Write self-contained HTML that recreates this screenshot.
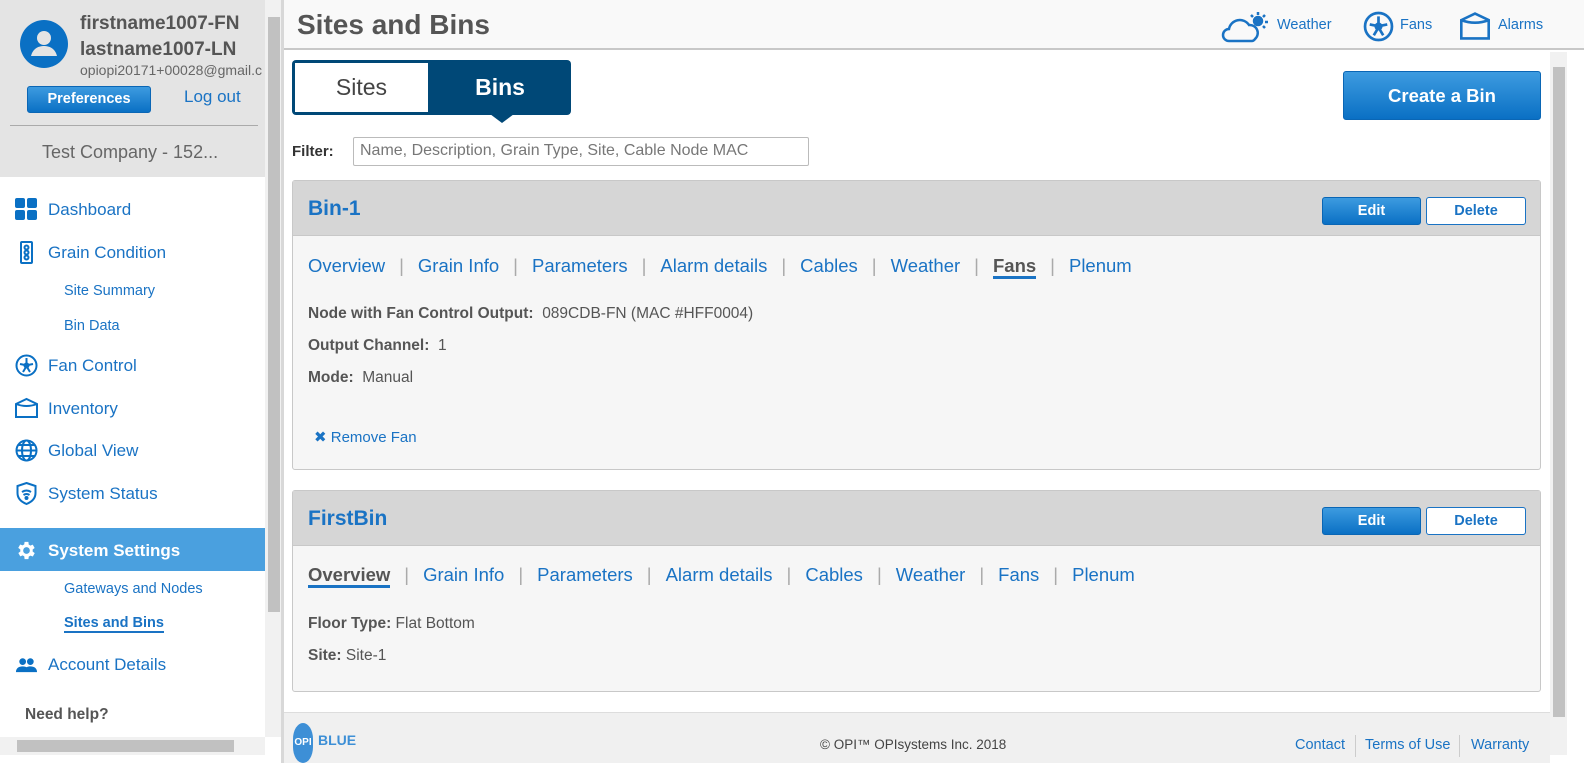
<!DOCTYPE html>
<html><head><meta charset="utf-8"><style>
*{box-sizing:border-box;margin:0;padding:0}
body{width:1584px;height:763px;overflow:hidden;font-family:"Liberation Sans",sans-serif;background:#fff;position:relative;color:#555}
.abs{position:absolute}
.blue{color:#1a73c4}
.side{left:0;top:0;width:265px;height:737px;background:#fff;overflow:hidden}
.top{left:0;top:0;width:265px;height:177px;background:#e4e4e4}
.nav{left:15px;font-size:17px;color:#1a73c4;display:flex;align-items:center}
.nav svg{margin-right:10px}
.sub{left:64px;font-size:14.5px;color:#1a73c4}
.btn{background:linear-gradient(#3d9be0,#0a70c4);color:#fff;font-weight:bold;border-radius:3px;text-align:center;border:1px solid #0a66b5}
.panel{left:292px;width:1249px;border:1px solid #c8c8c8;border-radius:3px;background:#f6f6f6}
.ph{height:55px;background:#d6d6d6;border-bottom:1px solid #c8c8c8;position:relative}
.ph h2{position:absolute;left:15px;top:16px;font-size:21px;color:#1a73c4}
.tabs{position:absolute;left:15px;font-size:18.5px;color:#1a73c4;white-space:nowrap}
.tabs span.sep{color:#aaa;margin:0 14px}
.tabs b{color:#555;border-bottom:3px solid #1a73c4}
.lbl{position:absolute;left:15px;font-size:15.5px;color:#555}
.lbl b{color:#555}
</style></head><body>

<div class="abs side">
 <div class="abs top">
  <svg class="abs" style="left:20px;top:20px" width="48" height="48" viewBox="0 0 48 48"><circle cx="24" cy="24" r="24" fill="#0a70c4"/><circle cx="24" cy="18" r="7" fill="#e4e4e4"/><path d="M11 36c2-8 8-10 13-10s11 2 13 10z" fill="#e4e4e4"/></svg>
  <div class="abs" style="left:80px;top:11px;font-size:19px;font-weight:bold;color:#555;line-height:26px;white-space:nowrap">firstname1007-FN<br>lastname1007-LN</div>
  <div class="abs" style="left:80px;top:62px;font-size:14px;color:#666;white-space:nowrap">opiopi20171+00028@gmail.c</div>
  <div class="abs btn" style="left:27px;top:86px;width:124px;height:27px;font-size:14.5px;line-height:25px">Preferences</div>
  <div class="abs blue" style="left:184px;top:87px;font-size:17px">Log out</div>
  <div class="abs" style="left:10px;top:125px;width:248px;height:1px;background:#aaa"></div>
  <div class="abs" style="left:42px;top:142px;font-size:18px;color:#666">Test Company - 152...</div>
 </div>
 <div class="abs nav" style="top:198px"><svg width="23" height="23" viewBox="0 0 23 23" fill="#0a70c4"><rect x="0" y="0" width="10" height="10" rx="2"/><rect x="12" y="0" width="10" height="10" rx="2"/><rect x="0" y="12" width="10" height="10" rx="2"/><rect x="12" y="12" width="10" height="10" rx="2"/></svg>Dashboard</div>
 <div class="abs nav" style="top:241px"><svg width="23" height="23" viewBox="0 0 23 23" fill="none" stroke="#0a70c4" stroke-width="2"><rect x="6" y="1" width="11" height="21" rx="1"/><circle cx="11.5" cy="6.5" r="2"/><circle cx="11.5" cy="11.5" r="2"/><circle cx="11.5" cy="16.5" r="2"/></svg>Grain Condition</div>
 <div class="abs sub" style="top:283px">Site Summary</div>
 <div class="abs sub" style="top:318px">Bin Data</div>
 <div class="abs nav" style="top:354px"><svg width="23" height="23" viewBox="0 0 23 23" fill="none" stroke="#0a70c4" stroke-width="2"><circle cx="11.5" cy="11.5" r="10"/><circle cx="11.5" cy="11.5" r="2" fill="#0a70c4"/><path d="M11.5 4v5M5 10l5 1M8 18l3-5M15 18l-3-5M18 10l-5 1"/></svg>Fan Control</div>
 <div class="abs nav" style="top:397px"><svg width="23" height="23" viewBox="0 0 23 23" fill="none" stroke="#0a70c4" stroke-width="2"><path d="M1 7l10.5-5 10.5 5v13H1z"/><path d="M1 7q10.5 4 21 0"/></svg>Inventory</div>
 <div class="abs nav" style="top:439px"><svg width="23" height="23" viewBox="0 0 23 23" fill="none" stroke="#0a70c4" stroke-width="2"><circle cx="11.5" cy="11.5" r="10"/><ellipse cx="11.5" cy="11.5" rx="4.5" ry="10"/><path d="M1.5 11.5h20M3 6h17M3 17h17"/></svg>Global View</div>
 <div class="abs nav" style="top:482px"><svg width="23" height="23" viewBox="0 0 23 23" fill="none" stroke="#0a70c4" stroke-width="2"><path d="M11.5 1l9 3v7c0 6-4 9-9 11-5-2-9-5-9-11V4z"/><path d="M7 10q4.5-3 9 0M8.5 13q3-2 6 0"/><circle cx="11.5" cy="16" r="1" fill="#0a70c4"/></svg>System Status</div>
 <div class="abs" style="left:0;top:528px;width:265px;height:43px;background:#4aa0df"></div>
 <div class="abs nav" style="top:539px;color:#fff;font-weight:bold"><svg width="23" height="23" viewBox="0 0 24 24" fill="#fff"><path d="M19.4 13a7.5 7.5 0 000-2l2.1-1.6-2-3.5-2.5 1a7 7 0 00-1.7-1L15 3h-4l-.4 2.7a7 7 0 00-1.7 1l-2.5-1-2 3.5L6.6 11a7.5 7.5 0 000 2l-2.1 1.6 2 3.5 2.5-1a7 7 0 001.7 1L11 21h4l.4-2.7a7 7 0 001.7-1l2.5 1 2-3.5zM13 15.5a3.5 3.5 0 110-7 3.5 3.5 0 010 7z" transform="translate(-1 0)"/></svg>System Settings</div>
 <div class="abs sub" style="top:581px">Gateways and Nodes</div>
 <div class="abs sub" style="top:615px;font-weight:bold;border-bottom:2px solid #1a73c4">Sites and Bins</div>
 <div class="abs nav" style="top:653px"><svg width="23" height="23" viewBox="0 0 24 24" fill="#0a70c4"><circle cx="8" cy="9" r="3.5"/><circle cx="16" cy="9" r="3.5"/><path d="M1 20c0-4 3-6 7-6s7 2 7 6zM14 20c0-2-.5-4-2-5 1-.7 2.5-1 4-1 4 0 7 2 7 6z"/></svg>Account Details</div>
 <div class="abs" style="left:25px;top:706px;font-size:15.5px;font-weight:bold;color:#555">Need help?</div>
</div>
<div class="abs" style="left:265px;top:0;width:16px;height:737px;background:#f1f1f1"></div>
<div class="abs" style="left:268px;top:17px;width:12px;height:595px;background:#c1c1c1"></div>
<div class="abs" style="left:0;top:737px;width:265px;height:18px;background:#f1f1f1"></div>
<div class="abs" style="left:17px;top:740px;width:217px;height:12px;background:#c1c1c1"></div>
<div class="abs" style="left:281px;top:0;width:3px;height:763px;background:#d8d8d8"></div>

<div class="abs" style="left:284px;top:0;width:1300px;height:50px;background:#f9f9f9;border-bottom:2px solid #c8c8c8"></div>
<div class="abs" style="left:297px;top:9px;font-size:28px;font-weight:bold;color:#555">Sites and Bins</div>
<svg class="abs" style="left:1221px;top:10px" width="50" height="34" viewBox="0 0 50 34" fill="none" stroke="#1a73c4" stroke-width="2.5"><path d="M8 31a6 6 0 010-12 11 11 0 0120-4 8 8 0 016 14 4 4 0 01-3 2z"/><circle cx="37" cy="11" r="4" fill="#1a73c4"/><path d="M37 2v3M44 5l-2 2M47 12h-3M30 5l2 2M44 18l-2-2"/></svg>
<div class="abs blue" style="left:1277px;top:17px;font-size:14.5px">Weather</div>
<svg class="abs" style="left:1363px;top:11px" width="31" height="31" viewBox="0 0 23 23" fill="none" stroke="#1a73c4" stroke-width="2"><circle cx="11.5" cy="11.5" r="10"/><circle cx="11.5" cy="11.5" r="2" fill="#1a73c4"/><path d="M11.5 4v5M5 10l5 1M8 18l3-5M15 18l-3-5M18 10l-5 1"/></svg>
<div class="abs blue" style="left:1400px;top:17px;font-size:14.5px">Fans</div>
<svg class="abs" style="left:1460px;top:11px" width="30" height="30" viewBox="0 0 23 23" fill="none" stroke="#1a73c4" stroke-width="2"><path d="M1 7l10.5-5 10.5 5v14H1z"/><path d="M1 7q10.5 4 21 0"/></svg>
<div class="abs blue" style="left:1498px;top:17px;font-size:14.5px">Alarms</div>

<div class="abs" style="left:1550px;top:52px;width:17px;height:703px;background:#f1f1f1"></div>
<div class="abs" style="left:1553px;top:67px;width:12px;height:650px;background:#c1c1c1"></div>

<div class="abs" style="left:292px;top:60px;width:279px;height:55px;background:#004877;border-radius:4px"></div>
<div class="abs" style="left:295px;top:63px;width:133px;height:49px;background:#fff;font-size:23px;color:#444;text-align:center;line-height:49px">Sites</div>
<div class="abs" style="left:430px;top:63px;width:140px;height:49px;font-size:23px;color:#fff;font-weight:bold;text-align:center;line-height:49px">Bins</div>
<div class="abs" style="left:490px;top:114px;width:0;height:0;border-left:12px solid transparent;border-right:12px solid transparent;border-top:9px solid #004877"></div>
<div class="abs btn" style="left:1343px;top:71px;width:198px;height:49px;font-size:18.5px;line-height:47px">Create a Bin</div>

<div class="abs" style="left:292px;top:143px;font-size:15px;font-weight:bold;color:#333">Filter:</div>
<div class="abs" style="left:353px;top:137px;width:456px;height:29px;border:1px solid #bbb;border-radius:2px;font-size:16px;color:#777;padding:4px 6px;white-space:nowrap;overflow:hidden">Name, Description, Grain Type, Site, Cable Node MAC</div>

<div class="abs panel" style="top:180px;height:290px">
 <div class="ph"><h2>Bin-1</h2>
  <div class="abs btn" style="left:1029px;top:16px;width:99px;height:28px;font-size:14.5px;line-height:26px">Edit</div>
  <div class="abs" style="left:1133px;top:16px;width:100px;height:28px;font-size:14.5px;line-height:26px;background:#fff;border:1px solid #1a73c4;border-radius:3px;color:#1a73c4;font-weight:bold;text-align:center">Delete</div>
 </div>
 <div class="tabs" style="top:74px">Overview<span class="sep">|</span>Grain Info<span class="sep">|</span>Parameters<span class="sep">|</span>Alarm details<span class="sep">|</span>Cables<span class="sep">|</span>Weather<span class="sep">|</span><b>Fans</b><span class="sep">|</span>Plenum</div>
 <div class="lbl" style="top:124px"><b>Node with Fan Control Output:</b>&nbsp; 089CDB-FN (MAC #HFF0004)</div>
 <div class="lbl" style="top:156px"><b>Output Channel:</b>&nbsp; 1</div>
 <div class="lbl" style="top:188px"><b>Mode:</b>&nbsp; Manual</div>
 <div class="lbl" style="top:247px;left:21px;color:#1a73c4;font-size:15px">✖ Remove Fan</div>
</div>

<div class="abs panel" style="top:490px;height:202px">
 <div class="ph"><h2>FirstBin</h2>
  <div class="abs btn" style="left:1029px;top:16px;width:99px;height:28px;font-size:14.5px;line-height:26px">Edit</div>
  <div class="abs" style="left:1133px;top:16px;width:100px;height:28px;font-size:14.5px;line-height:26px;background:#fff;border:1px solid #1a73c4;border-radius:3px;color:#1a73c4;font-weight:bold;text-align:center">Delete</div>
 </div>
 <div class="tabs" style="top:73px"><b>Overview</b><span class="sep">|</span>Grain Info<span class="sep">|</span>Parameters<span class="sep">|</span>Alarm details<span class="sep">|</span>Cables<span class="sep">|</span>Weather<span class="sep">|</span>Fans<span class="sep">|</span>Plenum</div>
 <div class="lbl" style="top:124px"><b>Floor Type:</b> Flat Bottom</div>
 <div class="lbl" style="top:156px"><b>Site:</b> Site-1</div>
</div>

<div class="abs" style="left:284px;top:712px;width:1266px;height:51px;background:#f0f0f0;border-top:1px solid #ddd"></div>
<div class="abs" style="left:293px;top:723px;width:20px;height:40px;border-radius:50%/40%;background:#3d8fd6;color:#fff;font-size:10px;font-weight:bold;line-height:40px;text-align:center">OPI</div>
<div class="abs" style="left:318px;top:732px;font-size:14px;color:#3d8fd6;font-weight:bold">BLUE</div>
<div class="abs" style="left:820px;top:737px;font-size:13.5px;color:#444">© OPI™ OPIsystems Inc. 2018</div>
<div class="abs blue" style="left:1295px;top:737px;font-size:14.5px">Contact</div>
<div class="abs" style="left:1355px;top:735px;width:1px;height:22px;background:#ccc"></div>
<div class="abs blue" style="left:1365px;top:737px;font-size:14.5px">Terms of Use</div>
<div class="abs" style="left:1459px;top:735px;width:1px;height:22px;background:#ccc"></div>
<div class="abs blue" style="left:1471px;top:737px;font-size:14.5px">Warranty</div>
</body></html>
